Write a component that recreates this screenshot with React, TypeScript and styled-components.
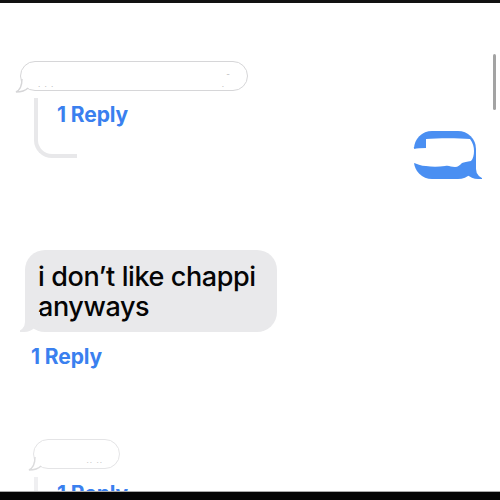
import React from "react";
import styled, { createGlobalStyle } from "styled-components";

const GlobalStyle = createGlobalStyle`
  html, body {
    margin: 0;
    padding: 0;
    background: #ffffff;
  }
  * {
    box-sizing: border-box;
  }
`;

const BUBBLE_GRAY = "#e9e9eb";
const IMESSAGE_BLUE = "#4a8ff2";
const LINK_BLUE = "#3a80ef";
const THREAD_LINE = "#e8e8ea";

const OutlineTail: React.FC = () => (
  <TailSvg viewBox="0 0 14 14" width="14" height="14">
    <path d="M7 0 C7 6 5 11 1 13 C6 13 10 12 13 9 L14 0 Z" fill="#ffffff" />
    <path d="M7 0 C7 6 5 11 1 13 C6 13 10 12 13 9" fill="none" stroke="#d6d6d8" strokeWidth="1.4" />
  </TailSvg>
);

const Thread: React.FC<{ faded?: boolean }> = ({ faded }) => (
  <ThreadBlock>
    <Curve $faded={faded} />
    <ReplyLink $indent={23}>1 Reply</ReplyLink>
  </ThreadBlock>
);

const App: React.FC = () => {
  return (
    <>
      <GlobalStyle />
      <Frame>
        <TopBar />
        <Screen>
          <Scrollbar />
          <Feed>
            <OutlineBubble $left={20} $top={58} $width={228}>
              <Residue style={{ left: 17, top: 20 }}>· · ·</Residue>
              <Residue style={{ right: 16, top: 8 }}>-</Residue>
              <Residue style={{ right: 22, top: 20 }}>·</Residue>
              <OutlineTail />
            </OutlineBubble>

            <ThreadRow>
              <Thread />
              <BlueBubble>
                <Smudge viewBox="0 0 62 48" width="62" height="48">
                  <path
                    d="M12 8 C24 7 44 7 56 8 C59 12 60 16 60 20 C60 24 59 28 57 30 C53 31 50 31 48 32 C46 34 44 36 41 36 C37 36 35 34 31 35 C24 36 18 36 12 35 C7 35 3 33 -2 31 L-2 17 C2 16 7 16 12 16 Z"
                    fill="#ffffff"
                  />
                  <path d="M0 17 C4 16 8 16 12 16" stroke={IMESSAGE_BLUE} strokeWidth="2" fill="none" />
                </Smudge>
              </BlueBubble>
            </ThreadRow>

            <GrayBubble>i don’t like chappi anyways</GrayBubble>
            <ReplyLink $left={31} $top={13}>
              1 Reply
            </ReplyLink>

            <OutlineBubble $left={33} $top={70} $width={87} $faded>
              <Residue style={{ right: 16, top: 18 }}>·· ··</Residue>
              <OutlineTail />
            </OutlineBubble>

            <BottomThread>
              <Thread faded />
            </BottomThread>
          </Feed>
        </Screen>
        <BottomBar />
      </Frame>
    </>
  );
};

export default App;

const Frame = styled.div`
  width: 500px;
  height: 500px;
  display: flex;
  flex-direction: column;
  overflow: hidden;
  font-family: Inter, "Liberation Sans", sans-serif;
`;

const TopBar = styled.div`
  height: 3px;
  flex-shrink: 0;
  background: #111111;
`;

const BottomBar = styled.div`
  height: 9px;
  flex-shrink: 0;
  background: #050505;
  border-top: 1px solid #a9a9a9;
`;

const Screen = styled.div`
  flex: 1;
  position: relative;
  overflow: hidden;
  background: #ffffff;
`;

const Scrollbar = styled.div`
  position: absolute;
  right: 4px;
  top: 51px;
  width: 3px;
  height: 56px;
  border-radius: 2px;
  background: #a3a3a3;
`;

const Feed = styled.div`
  display: flex;
  flex-direction: column;
  align-items: flex-start;
`;

const OutlineBubble = styled.div<{ $left: number; $top: number; $width: number; $faded?: boolean }>`
  position: relative;
  margin-left: ${(p) => p.$left}px;
  margin-top: ${(p) => p.$top}px;
  width: ${(p) => p.$width}px;
  height: 30px;
  border: 1.5px solid ${(p) => (p.$faded ? "#e0e0e2" : "#d6d6d8")};
  border-radius: 15px;
  background: #ffffff;
  opacity: ${(p) => (p.$faded ? 0.85 : 1)};
`;

const TailSvg = styled.svg`
  position: absolute;
  left: -6px;
  bottom: -3px;
`;

const Residue = styled.span`
  position: absolute;
  font-size: 8px;
  line-height: 8px;
  color: #b9b9bb;
  letter-spacing: 1px;
`;

const ThreadRow = styled.div`
  align-self: stretch;
  display: flex;
  justify-content: space-between;
  align-items: flex-start;
  margin-top: 7px;
`;

const ThreadBlock = styled.div`
  display: grid;
  margin-left: 34px;

  & > * {
    grid-area: 1 / 1;
  }
`;

const Curve = styled.div<{ $faded?: boolean }>`
  width: 43px;
  height: 60px;
  border-left: 4px solid ${(p) => (p.$faded ? "#efeff1" : THREAD_LINE)};
  border-bottom: 4px solid ${(p) => (p.$faded ? "#efeff1" : THREAD_LINE)};
  border-bottom-left-radius: 18px;
`;

const ReplyLink = styled.div<{ $indent?: number; $left?: number; $top?: number }>`
  padding-left: ${(p) => p.$indent ?? 0}px;
  padding-top: ${(p) => (p.$indent ? 5 : 0)}px;
  margin-left: ${(p) => p.$left ?? 0}px;
  margin-top: ${(p) => p.$top ?? 0}px;
  align-self: start;
  font-size: 21px;
  line-height: 24px;
  font-weight: 650;
  letter-spacing: -0.1px;
  color: ${LINK_BLUE};
  white-space: nowrap;
`;

const BlueBubble = styled.div`
  position: relative;
  margin-top: 33px;
  margin-right: 24px;
  width: 62px;
  height: 48px;
  border-radius: 18px;
  background: ${IMESSAGE_BLUE};

  &::before {
    content: "";
    position: absolute;
    right: -6px;
    bottom: 0;
    width: 20px;
    height: 20px;
    background: ${IMESSAGE_BLUE};
    border-bottom-left-radius: 16px;
  }

  &::after {
    content: "";
    position: absolute;
    right: -10px;
    bottom: 0;
    width: 10px;
    height: 20px;
    background: #ffffff;
    border-bottom-left-radius: 10px;
  }
`;

const Smudge = styled.svg`
  position: absolute;
  left: 0;
  top: 0;
  z-index: 1;
  overflow: visible;
`;

const GrayBubble = styled.div`
  position: relative;
  margin-top: 71px;
  margin-left: 25px;
  width: 252px;
  padding: 12px 14px 10px 13px;
  border-radius: 20px;
  background: ${BUBBLE_GRAY};
  color: #050505;
  font-size: 27px;
  line-height: 30px;
  font-weight: 500;
  letter-spacing: -0.4px;

  &::before {
    content: "";
    position: absolute;
    left: -5px;
    bottom: 0;
    width: 20px;
    height: 20px;
    background: ${BUBBLE_GRAY};
    border-bottom-right-radius: 16px;
  }

  &::after {
    content: "";
    position: absolute;
    left: -10px;
    bottom: 0;
    width: 10px;
    height: 20px;
    background: #ffffff;
    border-bottom-right-radius: 10px;
  }
`;

const BottomThread = styled.div`
  margin-top: 8px;
`;
